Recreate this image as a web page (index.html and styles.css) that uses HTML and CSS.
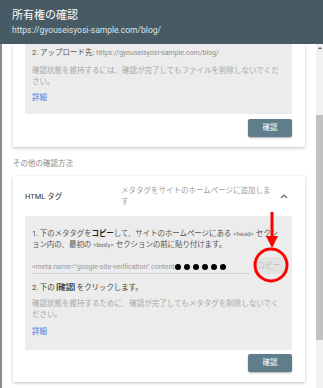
FILE: index.html
```html
<!DOCTYPE html>
<html lang="ja">
<head>
    <meta charset="UTF-8">
    <title>所有権の確認</title>
    <link rel="stylesheet" href="styles.css">
</head>
<body>
    <div class="dialog">
        <div class="head">
            <div class="title">所有権の確認</div>
            <div class="url">https://gyouseisyosi-sample.com/blog/</div>
        </div>
        <div class="main">
            <div class="scroll">
                <div class="card card-top">
                    <div class="panel panel-top">
                        <p class="step">2. アップロード先: <span class="light">https://gyouseisyosi-sample.com/blog/</span></p>
                        <p class="note">確認状態を維持するには、確認が完了してもファイルを削除しないでください。</p>
                        <a class="more" href="#">詳細</a>
                    </div>
                    <div class="actions"><span class="btn">確認</span></div>
                </div>

                <div class="section">その他の確認方法</div>

                <div class="card">
                    <div class="method">
                        <div class="method-name">HTML タグ</div>
                        <div class="method-desc">メタタグをサイトのホームページに追加します</div>
                        <div class="chevron">
                            <svg width="8" height="6" viewBox="0 0 8 6"><path d="M1 5 L4 2 L7 5" fill="none" stroke="#666" stroke-width="1.2"/></svg>
                        </div>
                    </div>
                    <div class="panel panel-html">
                        <p class="step">1. 下のメタタグを<b>コピー</b>して、サイトのホームページにある <code>&lt;head&gt;</code> セクション内の、最初の <code>&lt;body&gt;</code> セクションの前に貼り付けます。</p>
                        <div class="copyrow">
                            <div class="field">&lt;meta name="google-site-verification" content<span class="dots"><i></i><i></i><i></i><i></i><i></i><i></i></span></div>
                            <span class="copy">コピー</span>
                        </div>
                        <p class="step step2">2. 下の <span class="strong">[確認]</span> をクリックします。</p>
                        <p class="note note2">確認状態を維持するために、確認が完了してもメタタグを削除しないでください。</p>
                        <a class="more more2" href="#">詳細</a>
                    </div>
                    <div class="actions actions2"><span class="btn">確認</span></div>
                </div>
            </div>
            <div class="scrollbar">
                <div class="sb-up"></div>
                <div class="sb-thumb"></div>
            </div>
        </div>
    </div>

    <svg class="mark" width="50" height="85" viewBox="245 205 50 85">
        <line x1="272" y1="212" x2="272" y2="238" stroke="#f00" stroke-width="3"/>
        <polygon points="266,236 278,236 272,248" fill="#f00"/>
        <ellipse cx="271" cy="265" rx="16" ry="16" fill="none" stroke="#f00" stroke-width="3"/>
    </svg>
</body>
</html>
```

FILE: styles.css
```css
* {
    margin: 0;
    padding: 0;
    box-sizing: border-box;
}
body {
    width: 323px;
    height: 388px;
    overflow: hidden;
    font-family: Roboto, "Noto Sans CJK JP", sans-serif;
    background-color: #fff;
}
.dialog {
    display: flex;
    flex-direction: column;
    height: 388px;
}
.head {
    height: 44px;
    padding: 9px 12px 0;
    background-color: #475b65;
    color: #fff;
}
.head .title {
    font-size: 11px;
    line-height: 14px;
}
.head .url {
    margin-top: 1px;
    font-size: 8.5px;
    line-height: 12px;
    color: #dde3e6;
}
.main {
    display: flex;
    flex: 1;
    min-height: 0;
}
.scroll {
    flex: 1;
    padding: 0 11px;
    border-left: 2px solid #8c8c8c;
    overflow: hidden;
}
.card {
    background-color: #fff;
    padding: 0 13px 10px 12px;
    box-shadow: 0 1px 3px rgba(0,0,0,.25);
}
.panel {
    background-color: #ececec;
    padding: 3px 7px 11px;
    font-size: 7.5px;
    line-height: 11px;
}
.step {
    color: #555;
}
.step .light {
    color: #8f8f8f;
    font-size: 7px;
}
.note {
    margin-top: 6px;
    color: #a8a8a8;
}
.more {
    display: block;
    margin-top: 5px;
    color: #4a7fe0;
    text-decoration: none;
}
.actions {
    display: flex;
    justify-content: flex-end;
    margin-top: 5px;
}
.btn {
    width: 44px;
    height: 18px;
    line-height: 18px;
    text-align: center;
    font-size: 7.5px;
    color: #fff;
    background-color: #607d8b;
    border-radius: 2px;
    box-shadow: 0 1px 2px rgba(0,0,0,.3);
}
.section {
    margin: 11px 0 7px;
    font-size: 7.5px;
    line-height: 11px;
    color: #8a8a8a;
}
.method {
    display: flex;
    align-items: center;
    height: 40px;
    font-size: 7.5px;
    line-height: 11px;
}
.method-name {
    flex: 0 0 96px;
    color: #333;
}
.method-desc {
    width: 152px;
    color: #9e9e9e;
}
.chevron {
    flex: 1;
    display: flex;
    justify-content: flex-end;
    padding-right: 4px;
}
.panel-html {
    padding-top: 12px;
    padding-bottom: 13px;
}
.panel-html .step {
    letter-spacing: -0.1px;
}
.panel-html code {
    font-family: "DejaVu Sans Mono", monospace;
    font-size: 6px;
    color: #666;
}
.panel-html b {
    color: #222;
}
.copyrow {
    display: flex;
    align-items: flex-end;
    justify-content: space-between;
    margin-top: 7px;
}
.field {
    width: 218px;
    height: 15px;
    padding-top: 3px;
    border-bottom: 1px solid #cfcfcf;
    font-size: 7px;
    line-height: 10px;
    color: #999;
    white-space: nowrap;
    overflow: hidden;
}
.dots {
    display: inline-flex;
    gap: 2.5px;
    vertical-align: -1px;
}
.dots i {
    width: 6.5px;
    height: 6.5px;
    border-radius: 50%;
    background-color: #000;
}
.copy {
    width: 30px;
    height: 17px;
    margin-right: 1px;
    line-height: 17px;
    text-align: center;
    font-size: 7.5px;
    color: #bdbdbd;
    background-color: #e2e2e2;
}
.step2 {
    margin-top: 8px;
    color: #444;
}
.step2 .strong {
    color: #222;
    font-weight: 500;
}
.note2 {
    margin-top: 5px;
}
.more2 {
    margin-top: 6px;
}
.actions2 {
    margin-top: 4px;
}
.scrollbar {
    width: 7px;
    background-color: #f1f1f1;
}
.sb-up {
    width: 0;
    height: 0;
    margin: 3px auto 0;
    border-left: 2px solid transparent;
    border-right: 2px solid transparent;
    border-bottom: 2px solid #555;
}
.sb-thumb {
    height: 225px;
    margin-top: 66px;
    background-color: #c1c1c1;
}
.mark {
    position: absolute;
    left: 245px;
    top: 205px;
}
```
